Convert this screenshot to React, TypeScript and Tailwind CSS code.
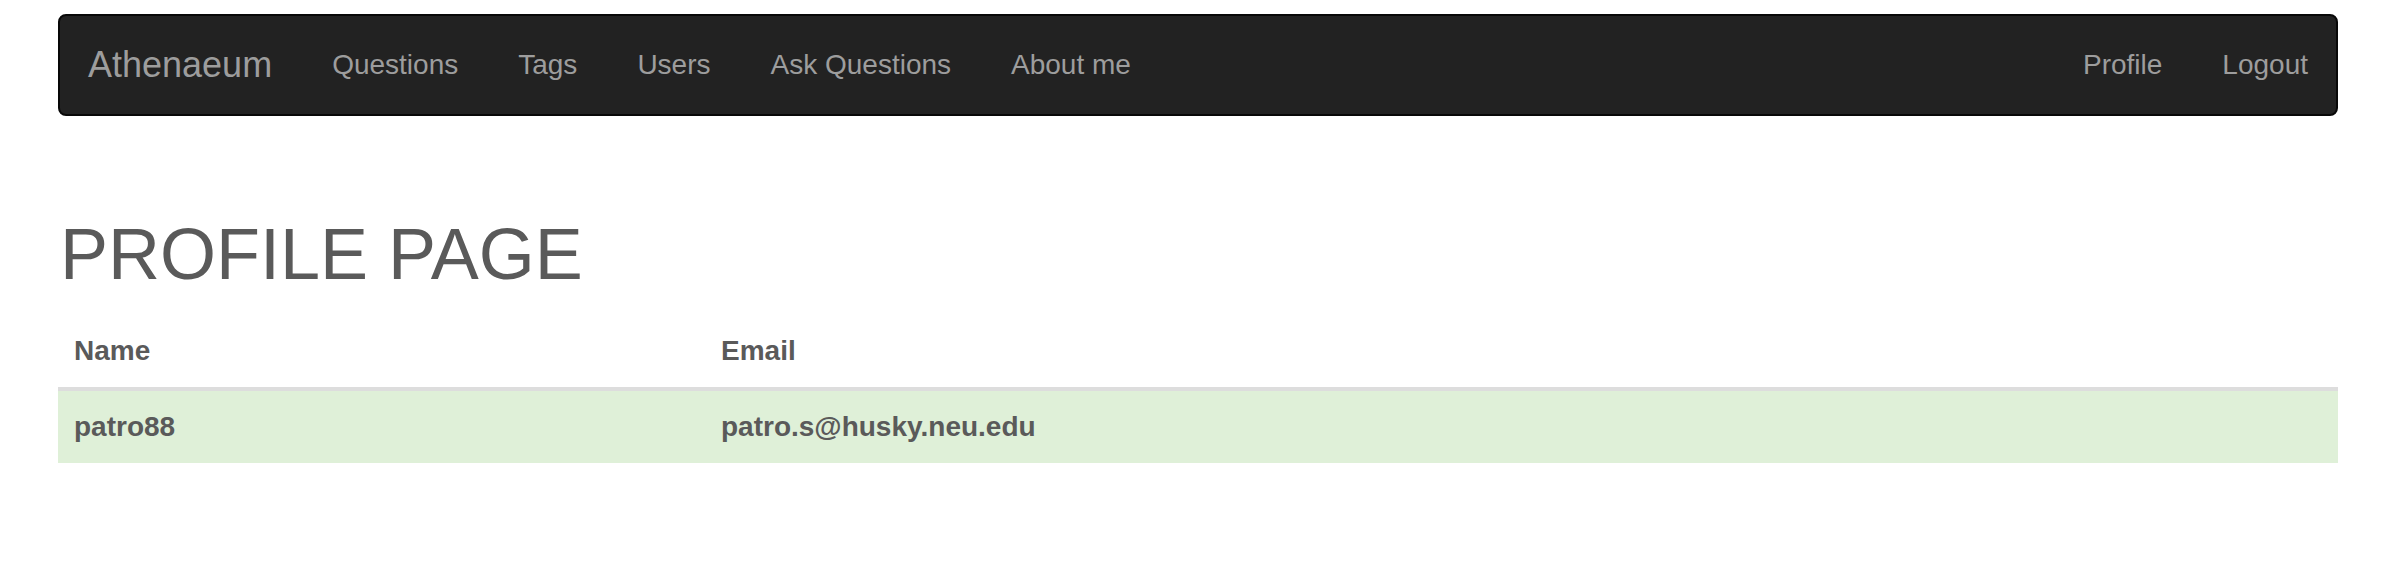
import React from 'react';

const leftLinks = ['Questions', 'Tags', 'Users', 'Ask Questions', 'About me'];
const rightLinks = ['Profile', 'Logout'];

export default function App() {
  return (
    <div className="min-h-[566px] bg-white font-['Liberation_Sans',Arial,sans-serif] text-[#5a5a5a]">
      <div className="ml-[58px] mr-[62px] pt-[14px]">
        {/* Navbar */}
        <nav className="flex h-[102px] items-center justify-between rounded-[8px] border-2 border-[#080808] bg-[#222222]">
          <div className="flex items-center">
            <a className="pl-[28px] pr-[30px] text-[36px] leading-[40px] text-[#9d9d9d]">Athenaeum</a>
            {leftLinks.map((link) => (
              <a key={link} className="px-[30px] text-[28px] leading-[40px] text-[#9d9d9d]">
                {link}
              </a>
            ))}
          </div>
          <div className="flex items-center">
            {rightLinks.map((link) => (
              <a key={link} className="px-[30px] text-[28px] leading-[40px] text-[#9d9d9d] last:pr-[28px]">
                {link}
              </a>
            ))}
          </div>
        </nav>

        {/* Heading */}
        <h1 className="mt-[99px] mb-[21px] pl-[2px] text-[72px] leading-[79px] font-normal text-[#5a5a5a]">
          PROFILE PAGE
        </h1>

        {/* Table */}
        <div className="text-[28px] font-bold leading-[40px]">
          <div className="grid grid-cols-[647px_1fr] border-b-4 border-[#dddddd]">
            <div className="px-[16px] py-[16px]">Name</div>
            <div className="px-[16px] py-[16px]">Email</div>
          </div>
          <div className="grid grid-cols-[647px_1fr] bg-[#dff0d8]">
            <div className="px-[16px] py-[16px]">patro88</div>
            <div className="px-[16px] py-[16px]">patro.s@husky.neu.edu</div>
          </div>
        </div>
      </div>
    </div>
  );
}
